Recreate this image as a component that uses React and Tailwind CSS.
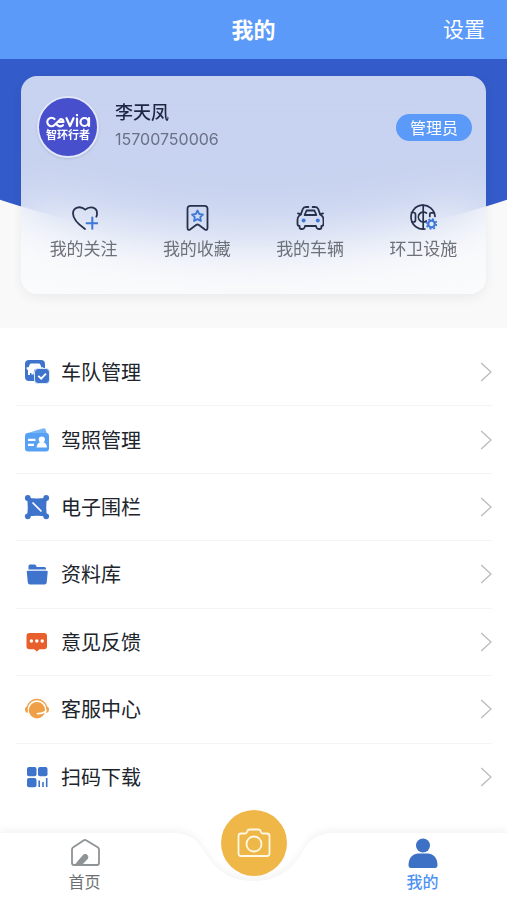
import React from "react";

const NAVY = "#26304d";
const BLUE = "#3d78d6";

function HeartPlusIcon() {
  return (
    <svg viewBox="0 0 28 28" className="h-7 w-7" fill="none" strokeWidth="1.8" strokeLinecap="round" strokeLinejoin="round" aria-hidden="true">
      <path d="M15 26 C10 22.5 3 16.5 3 10.5 C3 4.2 10.3 2.4 15.2 6.6 C20.1 2.4 27.4 4.2 27 10.8 C27 12 26.8 12.8 26.4 13.6" stroke={NAVY} />
      <path d="M22.3 14.5 V25.8 M16.6 20.2 H27.6" stroke={BLUE} strokeWidth="2" />
    </svg>
  );
}

function BookmarkStarIcon() {
  return (
    <svg viewBox="0 0 28 28" className="h-7 w-7" fill="none" strokeWidth="1.8" strokeLinejoin="round" aria-hidden="true">
      <path d="M7.5 2.8 H21.5 Q24.5 2.8 24.5 5.8 V24.8 Q24.5 28 21.9 26.4 L15.9 22 Q14.5 21 13.1 22 L7.1 26.4 Q4.5 28 4.5 24.8 V5.8 Q4.5 2.8 7.5 2.8 Z" stroke={NAVY} />
      <path d="M14.5 7.5 L16.2 11 L20 11.6 L17.2 14.2 L17.9 18 L14.5 16.1 L11.1 18 L11.8 14.2 L9 11.6 L12.8 11 Z" stroke={BLUE} />
    </svg>
  );
}

function CarIcon() {
  return (
    <svg viewBox="0 0 28 28" className="h-7 w-7" fill="none" strokeWidth="1.8" strokeLinecap="round" strokeLinejoin="round" aria-hidden="true">
      <path d="M12.4 4 H10 Q7.5 4 6.8 6 L4.8 11.4 M16.6 4 H19 Q21.500 4 22.200 6 L24.200 11.400" stroke={NAVY} />
      <path d="M4.8 11.4 L2.800 13.200 Q1.500 14.500 1.500 17 V21 Q1.500 23 3.600 23 V24.300 Q3.600 26 5.200 26 H6.500 Q8 26 8.600 24.200 L9 23 H20 L20.400 24.200 Q21 26 22.500 26 H23.800 Q25.400 26 25.400 24.300 V23 Q27.500 23 27.500 21 V17 Q27.500 14.500 26.200 13.200 L24.200 11.400 M2 10.400 L4.400 11.200 M27 10.400 L24.600 11.200" stroke={NAVY} />
      <path d="M10.600 7.500 H18.400 L20.400 12 H8.600 Z" stroke={NAVY} />
      <circle cx="7.600" cy="17.500" r="2" fill={BLUE} />
      <circle cx="21.800" cy="17.500" r="2" fill={BLUE} />
    </svg>
  );
}

function FacilityIcon() {
  return (
    <svg viewBox="0 0 28 28" className="h-7 w-7" fill="none" strokeWidth="1.7" strokeLinecap="round" aria-hidden="true">
      <path d="M26 13.5 A12 12 0 1 0 16 26 M14.200 2.200 V26" stroke={NAVY} />
      <path d="M2.500 9.500 H4.500 Q6.500 9.500 6.500 11.500 V17 Q6.500 19 4.500 19 H3 M17.400 10 A5 5 0 1 0 17.400 18 M20.800 13.500 V11 Q20.800 9.800 22 9.800 H25" stroke={NAVY} />
      <circle cx="22.500" cy="21" r="4.900" stroke={BLUE} strokeWidth="1.800" strokeDasharray="1.900 1.950" strokeLinecap="butt" />
      <circle cx="22.500" cy="21" r="3.300" stroke={BLUE} strokeWidth="2.200" />
    </svg>
  );
}

function FleetIcon() {
  return (
    <svg viewBox="0 0 26 26" className="h-[26px] w-[26px]" aria-hidden="true">
      <rect x="1" y="1" width="20" height="21" rx="4" fill="#3f74cc" />
      <path d="M5.600 5.800 Q6 4.600 7.200 4.600 H14.800 Q16 4.600 16.400 5.800 L17.400 8.400 L19.200 8 V10 H12 Q9.800 10.200 9.800 12.500 V15.500 H7.400 V14 H6 V16 H4 V11.200 L2.600 10 V8.200 H4.600 Z" fill="#fff" />
      <rect x="10.500" y="9.500" width="15" height="15" rx="3.500" fill="#3f74cc" stroke="#dbe7fa" />
      <path d="M14.300 16.800 L17.200 19.700 L22 14.600" fill="none" stroke="#fff" strokeWidth="1.800" />
    </svg>
  );
}

function LicenseIcon() {
  return (
    <svg viewBox="0 0 26 26" className="h-[26px] w-[26px]" aria-hidden="true">
      <path d="M2 6.500 L19.500 1.200 Q21 1 21.600 2.400 L23 6.500 Z" fill="#78b5f8" />
      <rect x="1" y="6" width="24" height="18.500" rx="3" fill="#57a1f5" />
      <path d="M4 12.800 H11.500 M4 17.800 H10" stroke="#fff" strokeWidth="2.200" />
      <circle cx="17.800" cy="12.500" r="3.100" fill="#fff" />
      <path d="M12.600 20.500 Q13 16.200 16.500 15 H19 Q22.600 16.200 23 20.500 Z" fill="#fff" />
    </svg>
  );
}

function FenceIcon() {
  return (
    <svg viewBox="0 0 26 26" className="h-[26px] w-[26px]" fill="#3f74cc" aria-hidden="true">
      <path d="M3 3.500 Q13 5.500 23 3.500 Q21.500 13 23 22.500 Q13 21 3 22.500 Q4.500 13 3 3.500 Z" />
      <circle cx="3.800" cy="4" r="2.900" />
      <circle cx="22.200" cy="4" r="2.900" />
      <circle cx="3.800" cy="22.300" r="2.900" />
      <circle cx="22.200" cy="22.300" r="2.900" />
      <path d="M8.500 8.500 L17.500 17.500" stroke="#fff" strokeWidth="1.700" />
    </svg>
  );
}

function FolderIcon() {
  return (
    <svg viewBox="0 0 26 26" className="h-[26px] w-[26px]" fill="#3f74cc" aria-hidden="true">
      <path d="M4.500 5 Q4.500 3.500 6 3.500 H10.500 Q11.500 3.500 12 4.500 L12.800 6 H20.500 Q22 6 22 7.500 V8.500 H4.500 Z" />
      <path d="M3.600 9.800 H22.600 Q23.800 9.800 23.700 11 L22.700 21.500 Q22.500 23.500 20.500 23.500 H6 Q4 23.500 3.800 21.500 L2.800 11 Q2.600 9.800 3.600 9.800 Z" />
    </svg>
  );
}

function FeedbackIcon() {
  return (
    <svg viewBox="0 0 26 26" className="h-[26px] w-[26px]" aria-hidden="true">
      <path d="M5.500 4 H20 Q23 4 23 7 V17.500 Q23 20.300 20 20.300 H15.500 L12.800 22.600 L10.200 20.300 H5.500 Q2.500 20.300 2.500 17.500 V7 Q2.500 4 5.500 4 Z" fill="#e95f2b" />
      <circle cx="7.400" cy="12" r="1.700" fill="#fff" />
      <circle cx="12.800" cy="12" r="1.700" fill="#fff" />
      <circle cx="18.200" cy="12" r="1.700" fill="#fff" />
    </svg>
  );
}

function SupportIcon() {
  return (
    <svg viewBox="0 0 26 26" className="h-[26px] w-[26px]" aria-hidden="true">
      <path d="M3.200 11.500 A10 10 0 0 1 22.800 11.500" fill="none" stroke="#ef9f45" strokeWidth="1.400" />
      <circle cx="13" cy="14.200" r="8.200" fill="#ef9f45" />
      <path d="M3.800 10.200 V17 Q1 16.500 1 13.600 Q1 10.700 3.800 10.200 Z M22.200 10.200 V17 Q25 16.500 25 13.600 Q25 10.700 22.200 10.200 Z" fill="#ef9f45" />
      <path d="M22 14.500 Q19.500 17.800 13.500 17.600" fill="none" stroke="#fff" strokeWidth="1.700" strokeLinecap="round" />
    </svg>
  );
}

function ScanIcon() {
  return (
    <svg viewBox="0 0 26 26" className="h-[26px] w-[26px]" fill="#3f74cc" aria-hidden="true">
      <rect x="3" y="3" width="9.500" height="9.300" rx="2" />
      <rect x="14" y="3" width="9.500" height="9.300" rx="2" />
      <rect x="3" y="14" width="9.500" height="9.300" rx="2" />
      <path d="M15.200 16.500 V23 M19 18 V23 M22.700 14 V23" stroke="#3f74cc" strokeWidth="1.600" />
    </svg>
  );
}

const shortcuts = [
  { label: "我的关注", Icon: HeartPlusIcon },
  { label: "我的收藏", Icon: BookmarkStarIcon },
  { label: "我的车辆", Icon: CarIcon },
  { label: "环卫设施", Icon: FacilityIcon },
];

const menu = [
  { label: "车队管理", Icon: FleetIcon },
  { label: "驾照管理", Icon: LicenseIcon },
  { label: "电子围栏", Icon: FenceIcon },
  { label: "资料库", Icon: FolderIcon },
  { label: "意见反馈", Icon: FeedbackIcon },
  { label: "客服中心", Icon: SupportIcon },
  { label: "扫码下载", Icon: ScanIcon },
];

function Header() {
  return (
    <header className="grid h-[59px] grid-cols-3 items-center bg-[#5b9af8] px-[22px] pb-1 text-white">
      <h1 className="col-start-2 text-center text-[22px] leading-8 font-bold">我的</h1>
      <button type="button" className="justify-self-end text-[21px] leading-8">设置</button>
    </header>
  );
}

function Avatar() {
  return (
    <div className="flex h-[62px] w-[62px] shrink-0 flex-col items-center justify-center rounded-full border-2 border-[#e1e7fa] bg-[#484fcc] text-white shadow-sm">
      <svg viewBox="0 0 46 14" className="h-[14px] w-[46px]" fill="none" stroke="#fff" strokeWidth="2.2" strokeLinecap="round" strokeLinejoin="round" role="img" aria-label="cevia">
        <path d="M9.500 5 A4.200 4.200 0 1 0 9.500 11 L15.500 5.200 A3 3 0 0 1 18.500 8 H13.500 M11.200 9.400 A4.200 4.200 0 0 0 18 11.200" />
        <path d="M21.500 4.200 L25 12 L28.500 4.200 M32 4.500 V12 M32 1 V1.200" />
        <circle cx="39.500" cy="8" r="4" />
        <path d="M44 4 V12" />
      </svg>
      <span className="text-[11px] leading-3 font-bold">智环行者</span>
    </div>
  );
}

function ProfileCard() {
  return (
    <section className="relative bg-[#f9f9f9] px-[21px] pt-[17px] pb-[34px]">
      <div className="absolute inset-x-0 top-0 h-[183px] bg-[#335bc9] [clip-path:circle(800px_at_50%_-618px)]" />
      <div className="relative h-[218px] rounded-[16px] bg-[#fafbfc]/75 px-[6px] pt-5 shadow-[0_4px_12px_rgba(0,0,0,0.06)] backdrop-blur-[28px]">
        <div className="flex items-center pr-2 pl-[10px]">
          <Avatar />
          <div className="ml-4 flex-1 pb-1">
            <h2 className="text-[18px] leading-7 font-medium text-[#1d2742]">李天凤</h2>
            <p className="font-['Inter'] text-[16px] leading-7 text-[#6b7184]">15700750006</p>
          </div>
          <span className="rounded-full bg-[#5b9af8] px-[14px] text-[16px] leading-[27px] text-white">管理员</span>
        </div>
        <nav className="mt-[45px] grid grid-cols-4">
          {shortcuts.map(({ label, Icon }) => (
            <button key={label} type="button" className="flex flex-col items-center gap-[3px] text-[17px] leading-7 text-[#6c7078]">
              <Icon />
              {label}
            </button>
          ))}
        </nav>
      </div>
    </section>
  );
}

function MenuList() {
  return (
    <main className="grid flex-1 auto-rows-fr bg-white pt-[11px] pr-[15px] pb-[22px] pl-4">
      {menu.map(({ label, Icon }) => (
        <button
          key={label}
          type="button"
          className="flex min-h-[60px] items-center border-b border-[#f4f4f5] pl-2 text-left text-[20px] leading-7 text-[#20242c] last:border-transparent"
        >
          <Icon />
          <span className="ml-[11px] flex-1">{label}</span>
          <svg viewBox="0 0 12 20" className="h-5 w-3" fill="none" stroke="#b9bbbf" strokeWidth="1.3" aria-hidden="true">
            <path d="M1.200 1 L11 10 L1.200 19" />
          </svg>
        </button>
      ))}
    </main>
  );
}

function TabBar() {
  return (
    <footer className="relative h-[67px]">
      <div className="absolute inset-0 flex drop-shadow-[0_-4px_3px_rgba(0,0,0,0.04)]">
        <div className="flex-1 bg-white" />
        <svg viewBox="0 0 201 67" className="h-[67px] w-[201px]" fill="#fff" aria-hidden="true">
          <path d="M0 0 H18 C38 0 45 8 52 20 C63 38 78 48 100.500 48 C123 48 138 38 149 20 C156 8 163 0 183 0 H201 V67 H0 Z" />
        </svg>
        <div className="flex-1 bg-white" />
      </div>
      <nav className="relative grid grid-cols-3 text-[16px] leading-6">
        <button type="button" className="flex flex-col items-center pt-1 text-[#6d7072]">
          <svg viewBox="0 0 32 32" className="h-8 w-8" aria-hidden="true">
            <path d="M3 12.500 Q3 11 4.300 10.200 L14.500 3.400 Q16 2.400 17.500 3.400 L28.700 10.200 Q30 11 30 12.500 V26 Q30 28 28 28 H5 Q3 28 3 26 Z" fill="none" stroke="#8e9396" strokeWidth="1.800" />
            <path d="M6 28 L14.200 18.300 Q16 16.500 18 18 Q19.800 20 18.200 22 L12.500 28 Z" fill="#8e9396" stroke="#8e9396" />
          </svg>
          <span>首页</span>
        </button>
        <div className="flex justify-center">
          <button type="button" aria-label="拍照" className="-mt-[23px] flex h-[66px] w-[66px] items-center justify-center rounded-full bg-[#efb648]">
            <svg viewBox="0 0 34 30" className="h-[30px] w-[34px]" fill="none" stroke="#fff8e4" strokeWidth="1.800" strokeLinejoin="round" aria-hidden="true">
              <path d="M4 5.500 H8.500 Q9.500 5.500 10 4 Q10.800 1.500 12.500 1.500 H21.500 Q23.200 1.500 24 4 Q24.500 5.500 25.500 5.500 H30 Q32.500 5.500 32.500 8 V25.500 Q32.500 28 30 28 H4 Q1.500 28 1.500 25.500 V8 Q1.500 5.500 4 5.500 Z" />
              <circle cx="17" cy="16" r="7.500" />
            </svg>
          </button>
        </div>
        <button type="button" aria-current="page" className="flex flex-col items-center pt-1 font-medium text-[#4e92f5]">
          <svg viewBox="0 0 32 32" className="h-8 w-8" fill="#3c71c6" aria-hidden="true">
            <circle cx="16" cy="8.500" r="7" />
            <path d="M1.500 28 C1.500 20 7 16.500 11 16.500 H21 C25 16.500 30.500 20 30.500 28 Q30.500 31 28 31 H4 Q1.500 31 1.500 28 Z" />
          </svg>
          <span>我的</span>
        </button>
      </nav>
    </footer>
  );
}

export default function App() {
  return (
    <div className="flex min-h-screen flex-col bg-white font-['Noto_Sans_CJK_SC','Liberation_Sans',sans-serif]">
      <Header />
      <ProfileCard />
      <MenuList />
      <TabBar />
    </div>
  );
}
